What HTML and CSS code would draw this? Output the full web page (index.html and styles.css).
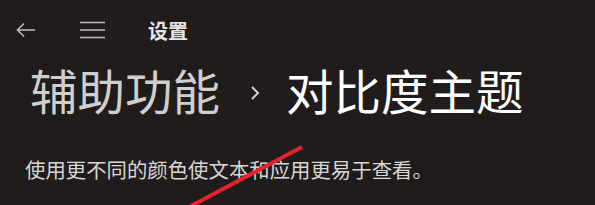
FILE: index.html
```html
<!DOCTYPE html>
<html lang="zh-CN">
<head>
    <meta charset="UTF-8">
    <meta name="viewport" content="width=device-width, initial-scale=1.0">
    <title>设置</title>
    <link rel="stylesheet" href="styles.css">
</head>
<body>
    <div class="window">
        <div class="titlebar">
            <svg class="back" width="20" height="16" viewBox="0 0 20 16">
                <path d="M19 8H2M8 1.5L1.5 8L8 14.5" fill="none" stroke="#bdbdbd" stroke-width="1.6"/>
            </svg>
            <svg class="menu" width="26" height="18" viewBox="0 0 26 18">
                <path d="M0 1.5H25M0 9H25M0 16.5H25" fill="none" stroke="#bdbdbd" stroke-width="1.6"/>
            </svg>
            <span class="app-name">设置</span>
        </div>

        <h1 class="breadcrumb">
            <span class="parent">辅助功能</span>
            <svg class="chevron" width="10" height="16" viewBox="0 0 10 16">
                <path d="M2 2L8 8L2 14" fill="none" stroke="#d0d0d0" stroke-width="2"/>
            </svg>
            <span class="current">对比度主题</span>
        </h1>

        <p class="desc">使用更不同的颜色使文本和应用更易于查看。</p>

        <!-- red annotation stroke over the screenshot -->
        <svg class="mark" width="595" height="205" viewBox="0 0 595 205">
            <line x1="302" y1="147" x2="176" y2="214" stroke="#e5222c" stroke-width="4"/>
        </svg>
    </div>
</body>
</html>
```

FILE: styles.css
```css
body {
    margin: 0;
    background: #211c1c;
    font-family: "Noto Sans CJK SC", "Noto Sans", sans-serif;
    color: #fff;
}
.window {
    position: relative;
    width: 595px;
    height: 205px;
    overflow: hidden;
}
.titlebar {
    display: flex;
    align-items: center;
    height: 60px;
    padding-left: 16px;
}
.back {
    margin-right: 44px;
}
.menu {
    margin-right: 42px;
}
.app-name {
    font-size: 20px;
    font-weight: 700;
    color: #e6e6e6;
}
.breadcrumb {
    display: flex;
    align-items: center;
    margin: 0 0 0 30px;
    font-size: 47.5px;
    font-weight: 400;
    line-height: 60px;
}
.parent {
    color: #cfcfcf;
}
.chevron {
    margin: 6px 26px 0 30px;
}
.current {
    color: #ffffff;
}
.desc {
    margin: 34px 0 0 25px;
    font-size: 20.4px;
    color: #d6d6d6;
}
.mark {
    position: absolute;
    left: 0;
    top: 0;
}
```
